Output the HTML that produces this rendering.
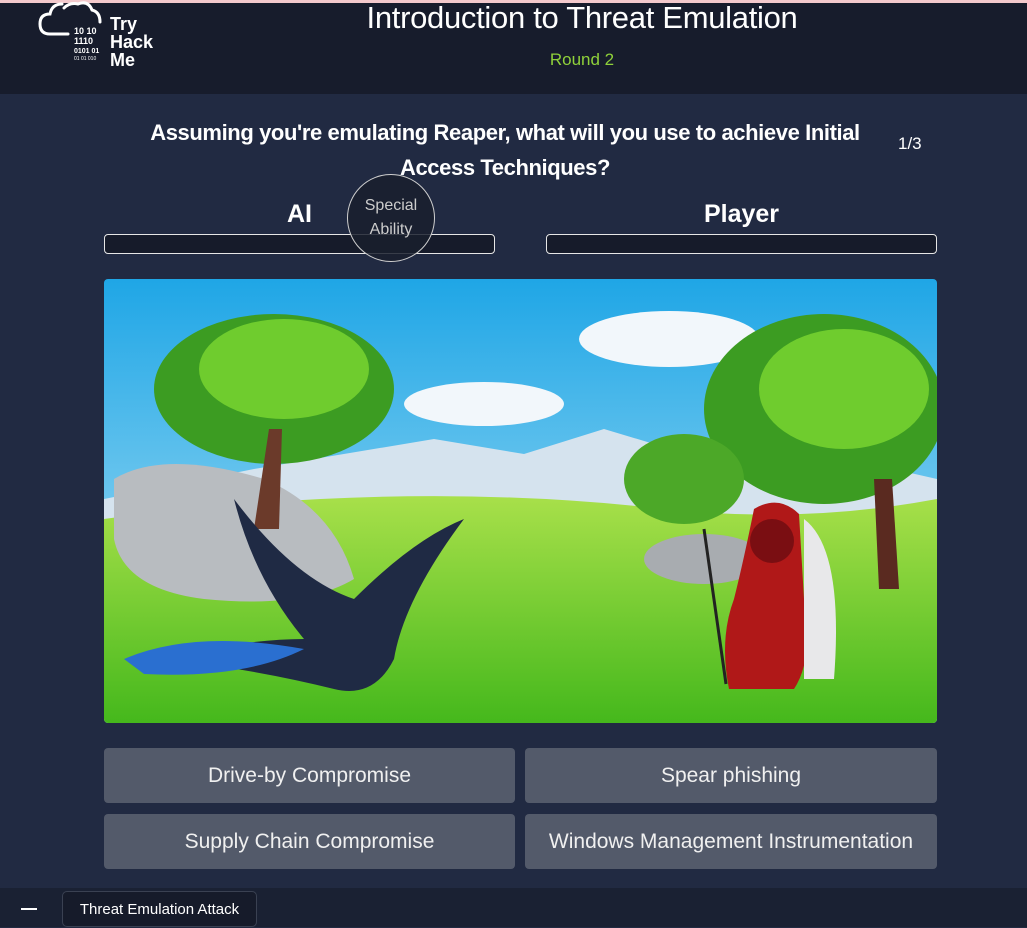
<!DOCTYPE html>
<html><head><meta charset="utf-8"><style>
*{margin:0;padding:0;box-sizing:border-box}
body{width:1027px;height:927px;background:#212a42;font-family:"Liberation Sans",sans-serif;color:#fff;position:relative;overflow:hidden}
.top{position:absolute;left:0;top:0;width:1027px;height:3px;background:#f3c9cc}
.hdr{position:absolute;left:0;top:3px;width:1027px;height:91px;background:#171c2c}
.title{position:absolute;left:0;width:1164px;top:-3px;text-align:center;font-size:31px;color:#fff;letter-spacing:-0.3px}
.round{position:absolute;left:0;width:1164px;top:47px;text-align:center;font-size:17px;color:#8fd13a}
.q{position:absolute;left:105px;width:800px;top:115px;text-align:center;font-size:22px;font-weight:bold;line-height:35px;letter-spacing:-0.4px}
.cnt{position:absolute;left:898px;top:134px;font-size:17px}
.lbl{position:absolute;top:200px;font-size:25px;font-weight:bold;text-align:center;width:391px}
.bar{position:absolute;top:234px;width:391px;height:20px;border:1.5px solid #e6e6e6;border-radius:4px;background:#161b2a}
.circ{position:absolute;left:347px;top:174px;width:88px;height:88px;border-radius:50%;border:1.5px solid #cfcfcf;background:rgba(25,30,45,.85);color:#ccc;font-size:16px;text-align:center;line-height:24px;padding-top:19px}
.scene{position:absolute;left:104px;top:279px;width:833px;height:444px;border-radius:4px;overflow:hidden}
.btn{position:absolute;width:411px;height:55px;background:#535a6a;border-radius:4px;font-size:21px;color:#f0f0f0;text-align:center;line-height:55px}
.foot{position:absolute;left:0;top:888px;width:1027px;height:39px;background:#1a2133}
.dash{position:absolute;left:21px;top:908px;width:16px;height:2px;background:#fff}
.tab{position:absolute;left:62px;top:891px;width:195px;height:36px;border:1px solid #3a4152;border-radius:5px;background:#161b2a;font-size:15px;line-height:36px;text-align:center}
</style></head><body>
<div class="top"></div>
<div class="hdr">
<svg style="position:absolute;left:36px;top:-3px" width="140" height="72" viewBox="0 0 140 72">
<path d="M32 34 L14 34 Q4 34 4 24 Q4 14 14 14 Q16 4 26 4 M28 8 Q34 2 42 4 Q52 0 56 10 Q64 12 64 22" stroke="#fff" stroke-width="3" fill="none" stroke-linecap="round"/>
<text x="38" y="34" font-size="9" fill="#fff" font-weight="bold">10  10</text>
<text x="38" y="44" font-size="9" fill="#fff" font-weight="bold">1110</text>
<text x="38" y="53" font-size="7" fill="#fff" font-weight="bold">0101 01</text>
<text x="38" y="60" font-size="5" fill="#fff">01  01 010</text>
<text x="74" y="30" font-size="18" fill="#fff" font-weight="bold">Try</text>
<text x="74" y="48" font-size="18" fill="#fff" font-weight="bold">Hack</text>
<text x="74" y="66" font-size="18" fill="#fff" font-weight="bold">Me</text>
</svg>
<div class="title">Introduction to Threat Emulation</div>
<div class="round">Round 2</div>
</div>
<div class="q">Assuming you're emulating Reaper, what will you use to achieve Initial<br>Access Techniques?</div>
<div class="cnt">1/3</div>
<div class="lbl" style="left:104px">AI</div>
<div class="lbl" style="left:546px">Player</div>
<div class="bar" style="left:104px"></div>
<div class="bar" style="left:546px"></div>
<div class="circ">Special<br>Ability</div>
<div class="scene">
<svg width="833" height="444" viewBox="0 0 833 444">
<defs><linearGradient id="sk" x1="0" y1="0" x2="0" y2="1"><stop offset="0" stop-color="#1fa6e6"/><stop offset="1" stop-color="#b9e6f6"/></linearGradient>
<linearGradient id="gr" x1="0" y1="0" x2="0" y2="1"><stop offset="0" stop-color="#a8e04a"/><stop offset="1" stop-color="#45b81c"/></linearGradient></defs>
<rect width="833" height="444" fill="url(#sk)"/>
<path d="M0 220 L150 190 L330 160 L420 175 L500 150 L600 180 L700 170 L833 200 L833 260 L0 260Z" fill="#d5e3ee"/>
<path d="M0 240 Q300 200 560 230 Q700 245 833 220 L833 444 L0 444Z" fill="url(#gr)"/>
<ellipse cx="380" cy="125" rx="80" ry="22" fill="#f2f7fb"/>
<ellipse cx="565" cy="60" rx="90" ry="28" fill="#f2f7fb"/>
<path d="M10 200 Q60 170 160 200 Q230 230 250 300 Q200 330 100 320 Q20 310 10 260Z" fill="#b8bcc0"/>
<ellipse cx="170" cy="110" rx="120" ry="75" fill="#3c9c22"/>
<ellipse cx="180" cy="90" rx="85" ry="50" fill="#6fcc2e"/>
<path d="M165 150 L150 250 L175 250 L178 150Z" fill="#6b3a2a"/>
<ellipse cx="600" cy="280" rx="60" ry="25" fill="#a8acb0"/>
<ellipse cx="720" cy="130" rx="120" ry="95" fill="#3c9c22"/>
<ellipse cx="740" cy="110" rx="85" ry="60" fill="#6fcc2e"/>
<ellipse cx="580" cy="200" rx="60" ry="45" fill="#4ca828"/>
<path d="M770 200 L775 310 L795 310 L788 200Z" fill="#5a2a20"/>
<path d="M130 220 Q190 300 250 320 Q310 260 360 240 Q300 320 290 380 Q270 420 230 410 Q150 390 60 380 Q140 360 200 360 Q150 300 130 220Z" fill="#1f2a44"/>
<path d="M20 380 Q90 350 200 370 Q140 400 40 395Z" fill="#2a6fd0"/>
<path d="M650 230 Q675 215 695 235 L700 320 Q710 380 690 410 L625 410 Q615 360 630 320 Q640 280 650 230Z" fill="#b01818"/>
<circle cx="668" cy="262" r="22" fill="#7a0e12"/>
<path d="M700 240 Q740 270 730 400 L700 400Z" fill="#e8e8ea"/>
<line x1="600" y1="250" x2="622" y2="405" stroke="#222" stroke-width="3"/>
</svg>
</div>
<div class="btn" style="left:104px;top:748px">Drive-by Compromise</div>
<div class="btn" style="left:525px;top:748px;width:412px">Spear phishing</div>
<div class="btn" style="left:104px;top:814px">Supply Chain Compromise</div>
<div class="btn" style="left:525px;top:814px;width:412px">Windows Management Instrumentation</div>
<div class="foot"></div>
<div class="dash"></div>
<div class="tab">Threat Emulation Attack</div>
</body></html>
